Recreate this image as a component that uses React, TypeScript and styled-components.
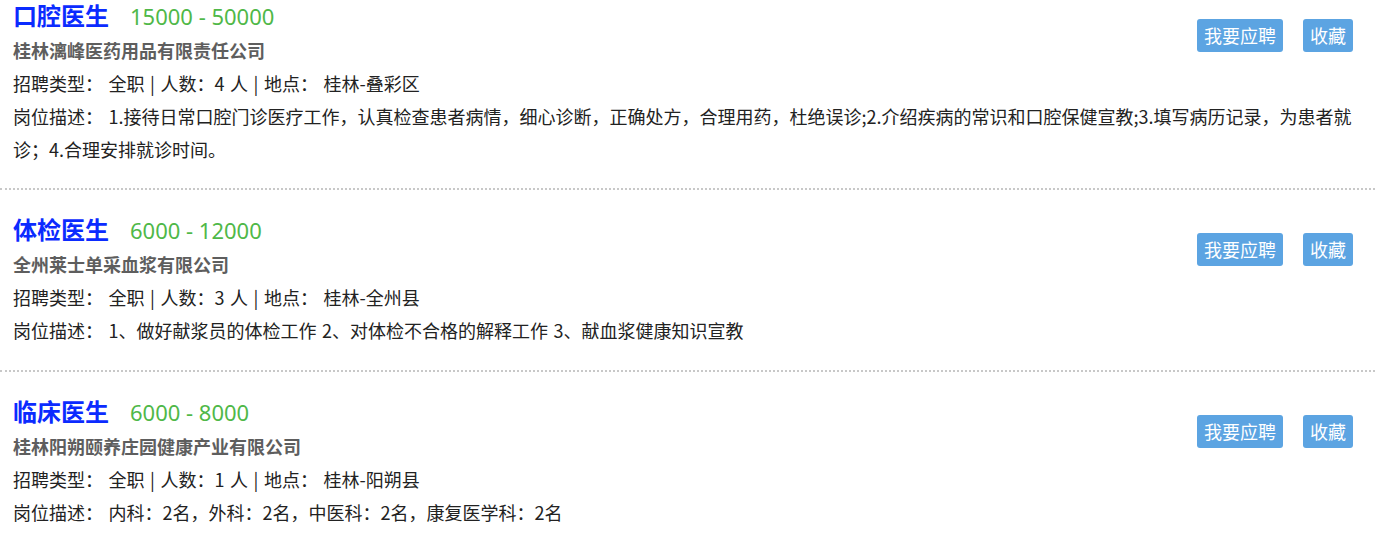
import styled, { createGlobalStyle } from 'styled-components'

const GlobalStyle = createGlobalStyle`
  html, body {
    margin: 0;
    padding: 0;
    background: #fff;
  }
  body {
    font-family: "Noto Sans CJK SC", "Noto Sans", sans-serif;
  }
`

interface Job {
  title: string
  salary: string
  company: string
  type: string
  count: number
  place: string
  desc: string
}

const jobs: Job[] = [
  {
    title: '口腔医生',
    salary: '15000 - 50000',
    company: '桂林漓峰医药用品有限责任公司',
    type: '全职',
    count: 4,
    place: '桂林-叠彩区',
    desc: '1.接待日常口腔门诊医疗工作，认真检查患者病情，细心诊断，正确处方，合理用药，杜绝误诊;2.介绍疾病的常识和口腔保健宣教;3.填写病历记录，为患者就诊；4.合理安排就诊时间。',
  },
  {
    title: '体检医生',
    salary: '6000 - 12000',
    company: '全州莱士单采血浆有限公司',
    type: '全职',
    count: 3,
    place: '桂林-全州县',
    desc: '1、做好献浆员的体检工作 2、对体检不合格的解释工作 3、献血浆健康知识宣教',
  },
  {
    title: '临床医生',
    salary: '6000 - 8000',
    company: '桂林阳朔颐养庄园健康产业有限公司',
    type: '全职',
    count: 1,
    place: '桂林-阳朔县',
    desc: '内科：2名，外科：2名，中医科：2名，康复医学科：2名',
  },
]

const List = styled.div`
  width: 1375px;
`

const Item = styled.div`
  padding: 24px 22px 23px 13px;
  border-bottom: 2px dotted #c8c8c8;

  &:first-child {
    padding-top: 0;
    padding-bottom: 22px;
  }

  &:last-child {
    border-bottom: none;
  }
`

const Header = styled.div`
  display: flex;
  justify-content: space-between;
  align-items: flex-start;
`

const TitleRow = styled.div`
  display: flex;
  align-items: baseline;
  gap: 21px;
  height: 30px;
  line-height: 30px;
  margin-bottom: 4px;
`

const Title = styled.a`
  font-size: 24px;
  font-weight: bold;
  color: #0b2bff;
  text-decoration: none;
`

const Salary = styled.span`
  font-family: "Noto Sans", sans-serif;
  font-size: 22px;
  color: #4fb848;
`

const Company = styled.div`
  font-size: 18px;
  font-weight: bold;
  color: #5e5e5e;
  line-height: 33px;
`

const Line = styled.div`
  font-size: 18px;
  color: #222;
  line-height: 33px;
  word-spacing: 1.5px;
`

const Actions = styled.div`
  display: flex;
  gap: 20px;
  margin-top: 19px;
`

const Button = styled.button`
  height: 33px;
  padding: 0 7px;
  border: none;
  border-radius: 3px;
  background: #5ca4e2;
  color: #fff;
  font-family: "Noto Sans CJK SC", sans-serif;
  font-size: 18px;
  line-height: 33px;
  cursor: pointer;
`

export default function App() {
  return (
    <>
      <GlobalStyle />
      <List>
        {jobs.map((job) => (
          <Item key={job.title}>
            <Header>
              <div>
                <TitleRow>
                  <Title href="#">{job.title}</Title>
                  <Salary>{job.salary}</Salary>
                </TitleRow>
                <Company>{job.company}</Company>
                <Line>
                  招聘类型： {job.type} | 人数：{job.count} 人 | 地点： {job.place}
                </Line>
              </div>
              <Actions>
                <Button>我要应聘</Button>
                <Button>收藏</Button>
              </Actions>
            </Header>
            <Line>岗位描述： {job.desc}</Line>
          </Item>
        ))}
      </List>
    </>
  )
}
